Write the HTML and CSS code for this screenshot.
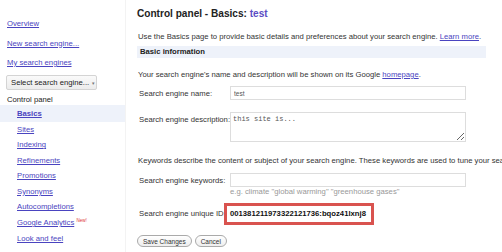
FILE: index.html
```html
<!DOCTYPE html>
<html lang="en">
<head>
  <meta charset="UTF-8">
  <title>Control panel - Basics</title>
  <link rel="stylesheet" href="styles.css">
</head>
<body>
<div class="page">
  <!-- Left navigation -->
  <div class="sidebar">
    <a class="side-link" href="#">Overview</a>
    <a class="side-link" href="#">New search engine...</a>
    <a class="side-link" href="#">My search engines</a>
    <div class="engine-select">Select search engine... <span class="arrow">&#9662;</span></div>
    <div class="side-title">Control panel</div>
    <ul class="subnav">
      <li class="active"><a href="#">Basics</a></li>
      <li><a href="#">Sites</a></li>
      <li><a href="#">Indexing</a></li>
      <li><a href="#">Refinements</a></li>
      <li><a href="#">Promotions</a></li>
      <li><a href="#">Synonyms</a></li>
      <li><a href="#">Autocompletions</a></li>
      <li><a href="#">Google Analytics</a> <span class="new">New!</span></li>
      <li><a href="#">Look and feel</a></li>
    </ul>
  </div>

  <!-- Main panel -->
  <div class="main">
    <h1>Control panel - Basics: <span class="engine-name">test</span></h1>
    <p class="intro">Use the Basics page to provide basic details and preferences about your search engine. <a href="#">Learn more</a>.</p>
    <div class="section-bar">Basic information</div>
    <p class="note">Your search engine's name and description will be shown on its Google <a href="#">homepage</a>.</p>

    <div class="field-row">
      <label for="name">Search engine name:</label>
      <input id="name" type="text" value="test">
    </div>
    <div class="field-row desc-row">
      <label for="desc">Search engine description:</label>
      <textarea id="desc">this site is...</textarea>
    </div>

    <p class="note keywords-note">Keywords describe the content or subject of your search engine. These keywords are used to tune your search engine results.</p>

    <div class="field-row">
      <label for="keywords">Search engine keywords:</label>
      <div>
        <input id="keywords" type="text">
        <div class="hint">e.g. climate "global warming" "greenhouse gases"</div>
      </div>
    </div>
    <div class="field-row id-row">
      <label>Search engine unique ID:</label>
      <span class="unique-id">001381211973322121736:bqoz41lxnj8</span>
    </div>

    <div class="actions">
      <button>Save Changes</button>
      <button>Cancel</button>
    </div>
  </div>
</div>
</body>
</html>
```

FILE: styles.css
```css
body {
  margin: 0;
  font-family: "Liberation Sans", Arial, sans-serif;
  font-size: 7.7px;
  color: #333;
  overflow: hidden;
}
a {
  color: #4a44c0;
}
.page {
  display: flex;
  width: 520px;
  height: 252px;
}

/* sidebar */
.sidebar {
  width: 125px;
  flex-shrink: 0;
  border-right: 1px solid #f3f3f3;
  padding-top: 19px;
}
.side-link {
  display: block;
  line-height: 10px;
  margin: 0 0 9.5px 7px;
}
.engine-select {
  display: inline-block;
  margin: -3px 0 0 6px;
  width: 91px;
  height: 15px;
  line-height: 14px;
  box-sizing: border-box;
  padding-left: 4px;
  border: 1px solid #d4d4d4;
  border-radius: 2px;
  background: linear-gradient(#fafafa, #ececec);
  color: #222;
  white-space: nowrap;
}
.engine-select .arrow {
  font-size: 5px;
  color: #777;
  margin-left: 1px;
}
.side-title {
  margin: 5px 0 0 7px;
  line-height: 10px;
  color: #222;
}
.subnav {
  list-style: none;
  margin: 0;
  padding: 0;
}
.subnav li {
  height: 15.6px;
  line-height: 15.6px;
  padding-left: 17px;
  white-space: nowrap;
}
.subnav li.active {
  background: #eef2fa;
  height: 17px;
  line-height: 17px;
}
.subnav li.active a {
  font-weight: bold;
}
.new {
  color: #dd3333;
  font-size: 4.5px;
  line-height: 0;
  vertical-align: 3px;
}

/* main */
.main {
  padding: 8px 0 0 11px;
  flex: 1;
}
h1 {
  margin: 0;
  font-size: 10.1px;
  line-height: 12px;
  color: #222;
}
.engine-name {
  color: #5b4cc4;
}
.intro {
  margin: 12px 0 0 1px;
  line-height: 10px;
  white-space: nowrap;
}
.section-bar {
  margin-top: 4px;
  width: 346px;
  height: 12px;
  line-height: 12px;
  padding-left: 3px;
  background: #eef2fa;
  font-weight: bold;
  color: #222;
}
.note {
  margin: 12px 0 0 1px;
  line-height: 10px;
  white-space: nowrap;
}
.field-row {
  display: flex;
  margin-top: 6px;
}
.field-row label {
  width: 93px;
  flex-shrink: 0;
  padding: 3px 0 0 2px;
  box-sizing: border-box;
  line-height: 10px;
  white-space: nowrap;
}
input, textarea {
  width: 236px;
  box-sizing: border-box;
  border: 1px solid #ddd;
  margin: 0;
  font-size: 6.5px;
  color: #555;
}
input {
  height: 14px;
  padding: 0 3px;
  font-family: "Liberation Sans", Arial, sans-serif;
}
textarea {
  height: 30px;
  padding: 2px 2px;
  font-family: "Liberation Mono", "Courier New", monospace;
  font-size: 7px;
  resize: vertical;
  display: block;
}
.desc-row {
  margin-top: 12px;
}
.keywords-note {
  margin-top: 14px;
}
.keywords-note + .field-row {
  margin-top: 7px;
}
.hint {
  color: #999;
  margin-top: 0;
  line-height: 10px;
}
.id-row {
  margin-top: 6px;
}
.id-row label {
  width: 87px;
  padding-top: 6px;
}
.unique-id {
  border: 3px solid #d9534f;
  padding: 3px 5px 3px 3px;
  line-height: 10px;
  font-weight: bold;
  color: #111;
}
.actions {
  margin-top: 10px;
  display: flex;
  gap: 3px;
}
button {
  font-family: "Liberation Sans", Arial, sans-serif;
  font-size: 6.5px;
  height: 12px;
  padding: 0 5px;
  border: 1px solid #aaa;
  border-radius: 6px;
  background: linear-gradient(#fff, #eee);
  color: #333;
}
```
